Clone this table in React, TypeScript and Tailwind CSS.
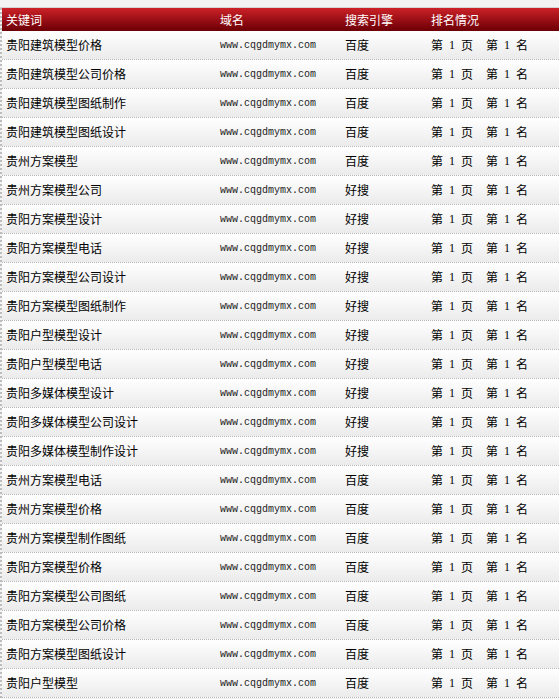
import React from "react";

const rows: [string, string][] = [
  ["贵阳建筑模型价格", "百度"],
  ["贵阳建筑模型公司价格", "百度"],
  ["贵阳建筑模型图纸制作", "百度"],
  ["贵阳建筑模型图纸设计", "百度"],
  ["贵州方案模型", "百度"],
  ["贵州方案模型公司", "好搜"],
  ["贵阳方案模型设计", "好搜"],
  ["贵阳方案模型电话", "好搜"],
  ["贵阳方案模型公司设计", "好搜"],
  ["贵阳方案模型图纸制作", "好搜"],
  ["贵阳户型模型设计", "好搜"],
  ["贵阳户型模型电话", "好搜"],
  ["贵阳多媒体模型设计", "好搜"],
  ["贵阳多媒体模型公司设计", "好搜"],
  ["贵阳多媒体模型制作设计", "好搜"],
  ["贵州方案模型电话", "百度"],
  ["贵州方案模型价格", "百度"],
  ["贵州方案模型制作图纸", "百度"],
  ["贵阳方案模型价格", "百度"],
  ["贵阳方案模型公司图纸", "百度"],
  ["贵阳方案模型公司价格", "百度"],
  ["贵阳方案模型图纸设计", "百度"],
  ["贵阳户型模型", "百度"],
];

const cjk = "font-['Noto_Sans_CJK_SC','Noto_Sans',sans-serif]";

function Rank() {
  return (
    <div className="flex items-center text-[12px] leading-none text-black">
      <span>第</span>
      <span className="ml-[6px] inline-block w-[6px] text-center font-['Liberation_Serif',serif] text-[12px]">1</span>
      <span className="ml-[6px]">页</span>
      <span className="ml-[13px]">第</span>
      <span className="ml-[6px] inline-block w-[6px] text-center font-['Liberation_Serif',serif] text-[12px]">1</span>
      <span className="ml-[6px]">名</span>
    </div>
  );
}

export default function App() {
  return (
    <div className={`w-[559px] h-[699px] overflow-hidden bg-[#f3f3f3] ${cjk}`}>
      <div className="h-[7px] bg-[#f3f3f3]" />
      <div className="h-[1px] bg-[#d4d4d4]" />
      <div className="border-l-2 border-dotted border-[#bdbdbd]">
        <div className="grid grid-cols-[214px_125px_86px_132px] h-[23px] items-center bg-gradient-to-b from-[#cd2128] to-[#6c0005] text-white text-[12px]">
          <div className="pl-[4px]">关键词</div>
          <div className="pl-[4px]">域名</div>
          <div className="pl-[4px]">搜索引擎</div>
          <div className="pl-[4px]">排名情况</div>
        </div>
        {rows.map(([kw, se], i) => (
          <div
            key={i}
            className="grid grid-cols-[214px_125px_86px_132px] h-[29px] items-center bg-gradient-to-b from-white to-[#ebebeb] border-b border-dotted border-[#b5b5b5] text-black text-[12px]"
          >
            <div className="pl-[4px]">{kw}</div>
            <div className="pl-[4px] font-['Liberation_Mono',monospace] text-[10px] text-[#222]">www.cqgdmymx.com</div>
            <div className="pl-[4px]">{se}</div>
            <div className="pl-[4px]">
              <Rank />
            </div>
          </div>
        ))}
      </div>
    </div>
  );
}
